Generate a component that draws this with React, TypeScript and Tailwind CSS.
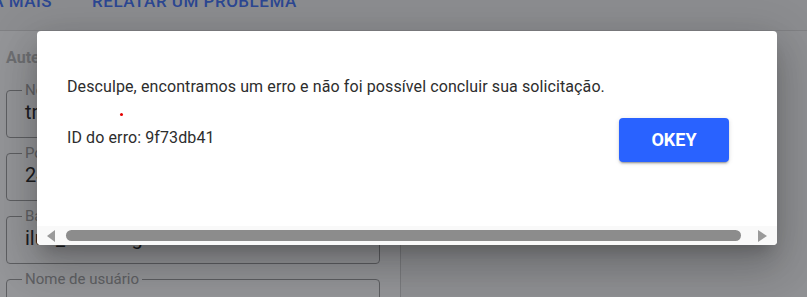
import React from "react";

type Field = { label: string; value: string };

const fields: Field[] = [
  { label: "Nome do servidor", value: "trilus.database" },
  { label: "Porta", value: "2433" },
  { label: "Banco de dados", value: "ilus_tecnologia" },
  { label: "Nome de usuário", value: "sa" },
];

function OutlinedField({ label, value }: Field) {
  return (
    <fieldset className="h-[56px] rounded-[4px] border border-[#a2a2a2] px-[18px] pb-[11px] m-0">
      <legend className="-ml-[3px] px-[3px] text-[15px] leading-4 text-[#a5a5a5]">
        {label}
      </legend>
      <div className="text-xl leading-7 text-[#333333] whitespace-nowrap">{value}</div>
    </fieldset>
  );
}

export default function App() {
  return (
    <div
      className="relative w-[807px] h-[297px] overflow-hidden bg-[#f6f6f7]"
      style={{ fontFamily: "Roboto, 'Liberation Sans', sans-serif" }}
    >
      {/* page underneath */}
      <div className="h-[31px] flex items-start border-b border-[#dcdcdc] bg-[#f2f2f2]">
        <div className="flex gap-[40px] -mt-[11px] -ml-[47px] text-[17px] leading-6 font-medium tracking-[0.03em] text-[#4d79f5]">
          <span>SAIBA MAIS</span>
          <span>RELATAR UM PROBLEMA</span>
        </div>
      </div>
      <div className="flex h-[266px]">
        <div className="w-[401px] shrink-0 border-r border-[#d3d3d3] bg-white pl-[6px] pr-[20px] pt-[15px]">
          <h2 className="text-base leading-6 font-bold text-[#bdbdbd]">Autenticação</h2>
          <div className="mt-[12px] flex flex-col gap-[7px]">
            {fields.map((f) => (
              <OutlinedField key={f.label} {...f} />
            ))}
          </div>
        </div>
        <div className="flex-1" />
      </div>

      {/* backdrop */}
      <div className="absolute inset-0 bg-[rgba(0,2,10,0.42)]" />

      {/* dialog */}
      <div className="absolute left-[37px] top-[31px] w-[740px] h-[214px] rounded-[4px] bg-white overflow-hidden flex flex-col shadow-[0_11px_15px_-7px_rgba(0,0,0,0.2),0_24px_38px_3px_rgba(0,0,0,0.14),0_9px_46px_8px_rgba(0,0,0,0.12)]">
        <div className="relative flex-1 pl-[30px] pt-[44px] text-[#2d2d2d] tracking-[0.1px]">
          <p className="text-base leading-6 whitespace-nowrap">
            Desculpe, encontramos um erro e não foi possível concluir sua solicitação.
          </p>
          <div className="mt-[19px] w-[662px] flex items-start justify-between">
            <span className="mt-[8px] text-base leading-6">ID do erro: 9f73db41</span>
            <button className="w-[110px] h-[44px] rounded-[4px] bg-[#2962ff] text-white text-lg font-bold tracking-normal shadow-[0_3px_1px_-2px_rgba(0,0,0,0.2),0_2px_2px_0_rgba(0,0,0,0.14),0_1px_5px_0_rgba(0,0,0,0.12)]">
              OKEY
            </button>
          </div>
          <span className="absolute left-[83px] top-[82px] w-[3px] h-[3px] rounded-full bg-[#e50000]" />
        </div>
        {/* horizontal scrollbar */}
        <div className="h-[19px] bg-[#f9f9f9] flex items-center pl-[10px] pr-[10px]">
          <svg width="8" height="12" viewBox="0 0 8 12" className="shrink-0">
            <path d="M8 0 L0 6 L8 12 Z" fill="#9a9a9a" />
          </svg>
          <div className="ml-[11px] w-[675px] h-[11px] rounded-full bg-[#8c8c8c]" />
          <div className="flex-1" />
          <svg width="9" height="12" viewBox="0 0 9 12" className="shrink-0">
            <path d="M0 0 L9 6 L0 12 Z" fill="#9a9a9a" />
          </svg>
        </div>
      </div>
    </div>
  );
}
